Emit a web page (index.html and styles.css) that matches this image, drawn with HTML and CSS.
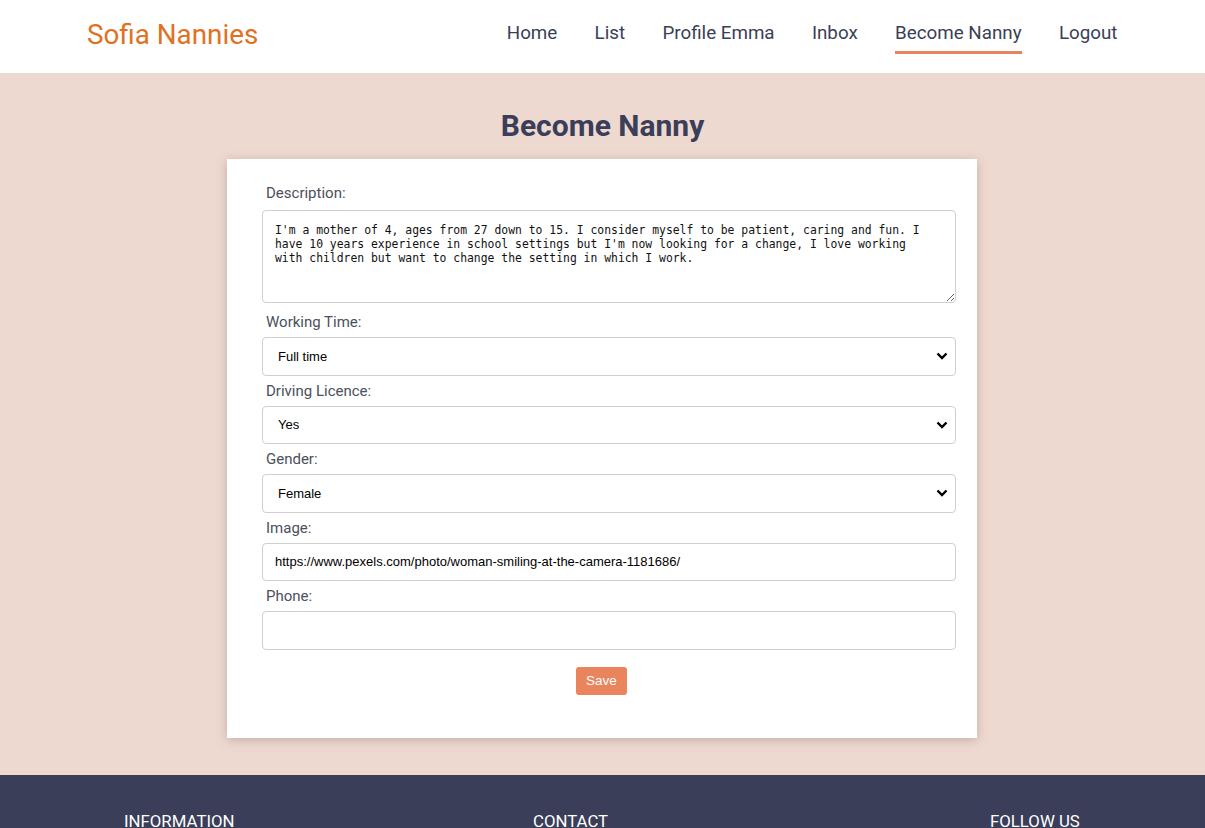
FILE: index.html
```html
<!DOCTYPE html>
<html lang="en">
<head>
<meta charset="utf-8">
<title>Sofia Nannies - Become Nanny</title>
<link rel="stylesheet" href="styles.css">
</head>
<body>
<header class="navbar">
  <a class="brand" href="#">Sofia Nannies</a>
  <nav class="nav">
    <a href="#">Home</a>
    <a href="#">List</a>
    <a href="#">Profile Emma</a>
    <a href="#">Inbox</a>
    <a href="#" class="active">Become Nanny</a>
    <a href="#">Logout</a>
  </nav>
</header>
<main class="main">
  <h1 class="title">Become Nanny</h1>
  <form class="card">
    <label class="label" for="desc">Description:</label>
    <textarea id="desc" class="control textarea">I'm a mother of 4, ages from 27 down to 15. I consider myself to be patient, caring and fun. I have 10 years experience in school settings but I'm now looking for a change, I love working with children but want to change the setting in which I work.</textarea>
    <label class="label" for="wt">Working Time:</label>
    <select id="wt" class="control select"><option>Full time</option><option>Part time</option></select>
    <label class="label" for="dl">Driving Licence:</label>
    <select id="dl" class="control select"><option>Yes</option><option>No</option></select>
    <label class="label" for="gd">Gender:</label>
    <select id="gd" class="control select"><option>Female</option><option>Male</option></select>
    <label class="label" for="img">Image:</label>
    <input id="img" class="control input" type="text" value="https://www.pexels.com/photo/woman-smiling-at-the-camera-1181686/">
    <label class="label" for="ph">Phone:</label>
    <input id="ph" class="control input" type="text" value="">
    <div class="actions"><button type="button" class="btn">Save</button></div>
  </form>
</main>
<footer class="footer">
  <h3 class="foot-h">INFORMATION</h3>
  <h3 class="foot-h">CONTACT</h3>
  <h3 class="foot-h">FOLLOW US</h3>
</footer>
</body>
</html>
```

FILE: styles.css
```css
* { box-sizing: border-box; }
html, body { margin: 0; padding: 0; }
body {
  font-family: Roboto, "Liberation Sans", sans-serif;
  background: #eed9d0;
  color: #3a3e58;
  overflow: hidden;
}
.navbar {
  height: 73px;
  background: #ffffff;
  display: flex;
  align-items: center;
  justify-content: space-between;
  padding: 0 87.5px 0 87px;
}
.brand {
  font-size: 27.8px;
  color: #e0711f;
  text-decoration: none;
  margin-top: -4px;
}
.nav {
  display: flex;
  gap: 37.3px;
  align-self: stretch;
  align-items: center;
}
.nav a {
  font-size: 18.8px;
  color: #3a3f55;
  text-decoration: none;
  position: relative;
  margin-top: -8px;
}
.nav a.active::after {
  content: "";
  position: absolute;
  left: 0;
  right: 0;
  bottom: -10px;
  height: 2.5px;
  background: #e8845c;
}
.main {
  display: flex;
  flex-direction: column;
  align-items: center;
  padding-bottom: 37px;
}
.title {
  margin: 35px 0 15px;
  font-size: 30px;
  font-weight: 700;
  line-height: 36px;
  color: #3a3e58;
}
.card {
  width: 750px;
  height: 579px;
  margin-right: 1px;
  background: #fff;
  box-shadow: 0 2px 10px rgba(120, 90, 80, 0.35);
  padding: 20px 21px 0 35px;
  display: flex;
  flex-direction: column;
}
.label {
  display: block;
  font-size: 15px;
  line-height: 18px;
  color: #4b505b;
  margin: 6px 0 6px 4px;
}
.label:first-child { margin-top: 5px; }
.control {
  display: block;
  width: 100%;
  border: 1px solid #cfcfcf;
  border-radius: 4px;
  background-color: #fff;
  margin: 0;
}
.textarea {
  height: 93px;
  margin: 2px 0 4px;
  padding: 12px 32px 12px 12px;
  font-family: "DejaVu Sans Mono", monospace;
  font-size: 11.4px;
  line-height: 14px;
  color: #111;
  resize: vertical;
}
.select {
  height: 38.5px;
  padding: 0 30px 0 15px;
  font-family: "Liberation Sans", Arial, sans-serif;
  font-size: 13px;
  color: #000;
  -webkit-appearance: none;
  appearance: none;
  background-image: url("data:image/svg+xml,%3Csvg xmlns='http://www.w3.org/2000/svg' width='12' height='8' viewBox='0 0 12 8'%3E%3Cpath d='M1.5 1.5 L6 6 L10.5 1.5' fill='none' stroke='%23000' stroke-width='2.4'/%3E%3C/svg%3E");
  background-repeat: no-repeat;
  background-position: right 7px center;
  background-size: 12px 8px;
}
.input {
  height: 38.5px;
  padding: 0 12px;
  font-family: "Liberation Sans", Arial, sans-serif;
  font-size: 13px;
  color: #000;
}
.actions {
  display: flex;
  justify-content: center;
  margin: 17px -20px 0 -35px;
}
.btn {
  height: 28px;
  width: 51px;
  padding: 0;
  border: none;
  border-radius: 3px;
  background: #e9845c;
  color: #fff;
  font-family: "Liberation Sans", Arial, sans-serif;
  font-size: 13.5px;
}
.footer {
  background: #3a3e58;
  height: 200px;
  display: grid;
  grid-template-columns: 409px 457px auto;
  padding: 36px 0 0 124px;
}
.foot-h {
  margin: 0;
  font-size: 16.8px;
  font-weight: 400;
  line-height: 20px;
  color: #fff;
}
```
